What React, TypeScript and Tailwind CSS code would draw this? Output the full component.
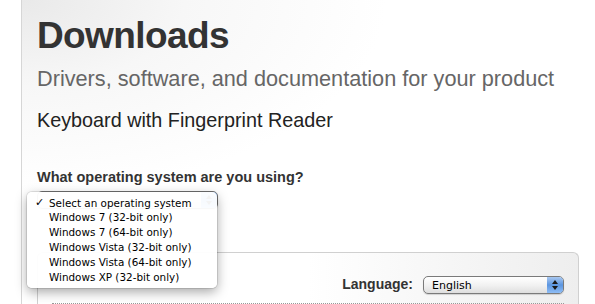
import React from "react";

const osOptions = [
  "Select an operating system",
  "Windows 7 (32-bit only)",
  "Windows 7 (64-bit only)",
  "Windows Vista (32-bit only)",
  "Windows Vista (64-bit only)",
  "Windows XP (32-bit only)",
];

function Stepper() {
  return (
    <div className="flex h-full w-[16px] flex-col items-center justify-center gap-[2px] rounded-r-[4px] bg-gradient-to-b from-[#a9c8f0] via-[#5b95e0] to-[#8fbdf5]">
      <svg width="6" height="4" viewBox="0 0 6 4">
        <path d="M3 0 L6 4 L0 4 Z" fill="#1a1a1a" />
      </svg>
      <svg width="6" height="4" viewBox="0 0 6 4">
        <path d="M0 0 L6 0 L3 4 Z" fill="#1a1a1a" />
      </svg>
    </div>
  );
}

function AquaSelect({ label, width }: { label: string; width: string }) {
  return (
    <div
      className={`flex h-[18px] ${width} items-stretch rounded-[5px] border border-[#7a7a7a] bg-gradient-to-b from-white via-[#f2f2f2] to-[#dedede] shadow-[0_1px_1px_rgba(0,0,0,0.15)]`}
    >
      <span className="flex-1 pl-[8px] text-[11px] leading-[17px] text-black [font-family:'DejaVu_Sans',sans-serif]">
        {label}
      </span>
      <Stepper />
    </div>
  );
}

export default function App() {
  return (
    <div className="flex h-[304px] w-[595px] overflow-hidden bg-white [font-family:'Liberation_Sans',Arial,sans-serif]">
      <div className="w-[21px] shrink-0 bg-white" />
      <div className="relative flex-1 border-l border-[#d6d6d6] bg-[radial-gradient(ellipse_at_top_left,#e9e9e9_0%,#f7f7f7_20%,#ffffff_45%)] pl-[15px] pr-[16px]">
        <h1 className="mt-[14px] text-[37px] font-bold leading-[44px] tracking-[-0.6px] text-[#333]">
          Downloads
        </h1>
        <p className="mt-[8px] text-[21.7px] leading-[26px] text-[#666]">
          Drivers, software, and documentation for your product
        </p>
        <p className="mt-[16px] text-[19.8px] leading-[24px] text-[#222]">
          Keyboard with Fingerprint Reader
        </p>
        <p className="mt-[37px] text-[14.5px] font-bold leading-[17px] text-[#333]">
          What operating system are you using?
        </p>
        <div className="mt-[5px]">
          <AquaSelect label="" width="w-[181px]" />
        </div>

        <div className="mt-[43px] rounded-t-[6px] border border-b-0 border-[#d0d0d0] bg-gradient-to-r from-white via-white to-[#eeeeee] px-[14px]">
          <div className="flex items-center justify-end gap-[10px] pb-[8px] pt-[21px]">
            <span className="text-[14px] font-bold text-[#333]">Language:</span>
            <AquaSelect label="English" width="w-[141px]" />
          </div>
          <div className="border-b border-dotted border-[#999]" />
        </div>

        {/* open OS menu, drawn over its select */}
        <div className="absolute left-[5px] top-[192px] w-[190px] rounded-[5px] bg-white/95 pb-[3px] pt-[4px] shadow-[0_4px_12px_rgba(0,0,0,0.35),0_0_0_1px_rgba(0,0,0,0.1)] [font-family:'DejaVu_Sans',sans-serif]">
          {osOptions.map((opt, i) => (
            <div key={opt} className="flex h-[14.8px] items-center text-[10.4px] text-black">
              <span className="w-[22px] pl-[8px] text-[11px]">{i === 0 ? "✓" : ""}</span>
              <span>{opt}</span>
            </div>
          ))}
        </div>
      </div>
    </div>
  );
}
